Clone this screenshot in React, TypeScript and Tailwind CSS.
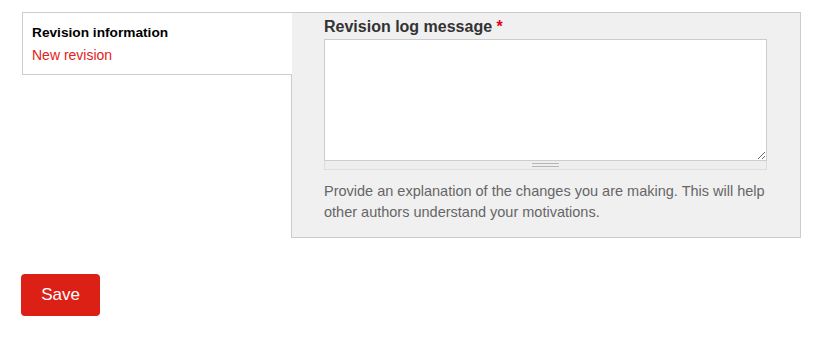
export default function App() {
  return (
    <div className="min-h-[353px] bg-white pt-3 pl-[22px] pr-5 font-['Liberation_Sans',Arial,sans-serif]">
      <div className="flex items-start">
        {/* vertical tab */}
        <div className="relative z-10 -mr-px w-[270px] h-[63px] border-t border-l border-b border-[#cccccc] bg-white pl-[9px] pt-[11px]">
          <div className="text-[13.7px] font-bold leading-[17px] text-black">Revision information</div>
          <a href="#" className="mt-[6px] block text-[14px] leading-[17px] text-[#e3211a]">
            New revision
          </a>
        </div>

        {/* panel */}
        <div className="flex-1 h-[226px] border border-[#cccccc] bg-[#f0f0f0] pl-8 pr-[33px] pt-[3px]">
          <label className="block text-[16px] font-bold leading-[22px] text-[#333333]">
            Revision log message <span className="text-[#e4001b]">*</span>
          </label>
          <div className="mt-px">
            <textarea className="block w-full h-[122px] resize-y border border-[#cccccc] bg-white outline-none" />
            <div className="flex h-[9px] flex-col items-center justify-center gap-[2px] border border-t-0 border-[#dddddd] bg-[#eeeeee]">
              <div className="h-px w-[27px] bg-[#b5b5b5]" />
              <div className="h-px w-[27px] bg-[#b5b5b5]" />
            </div>
          </div>
          <p className="mt-[11px] text-[14.5px] leading-[21px] text-[#666666]">
            Provide an explanation of the changes you are making. This will help
            <br />
            other authors understand your motivations.
          </p>
        </div>
      </div>

      <button className="mt-9 -ml-px h-[42px] w-[79px] rounded-[4px] bg-[#dd2016] text-[17px] text-white">
        Save
      </button>
    </div>
  );
}
